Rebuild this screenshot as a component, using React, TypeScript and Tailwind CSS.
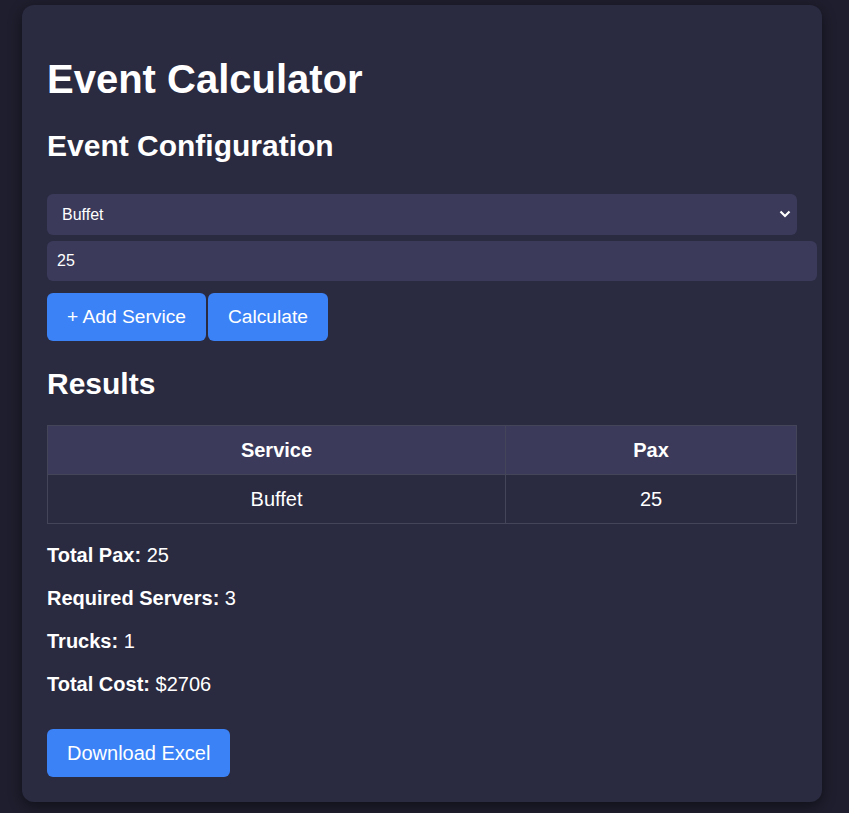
import { useState } from 'react'

export default function App() {
  const [service, setService] = useState('Buffet')
  const [pax, setPax] = useState('25')

  return (
    <div className="min-h-screen bg-[#1e1e2e] pt-[5px] pl-[22px] font-['Liberation_Sans',Arial,sans-serif] text-white">
      <div className="w-[800px] rounded-xl bg-[#2a2a40] p-[25px] shadow-[0_4px_14px_rgba(0,0,0,0.45)]">
        <h1 className="mt-[26px] text-[40px] font-bold leading-[46px]">Event Calculator</h1>
        <h2 className="mt-[26px] text-[30px] font-bold leading-[35px]">Event Configuration</h2>

        <div className="relative mt-[31px] w-[750px]">
          <select
            value={service}
            onChange={(e) => setService(e.target.value)}
            className="block h-[41px] w-full appearance-none rounded-md bg-[#3b3a5a] pl-[15px] text-[16px] text-white outline-none"
          >
            <option>Buffet</option>
            <option>Plated</option>
            <option>Cocktail</option>
          </select>
          <svg
            className="pointer-events-none absolute right-[6px] top-[15px]"
            width="12"
            height="10"
            viewBox="0 0 12 10"
            fill="none"
          >
            <polyline points="1.5,2.5 6,7 10.5,2.5" stroke="white" strokeWidth="2.2" />
          </svg>
        </div>

        <input
          value={pax}
          onChange={(e) => setPax(e.target.value)}
          className="mt-[6px] block h-[40px] w-[770px] rounded-md bg-[#3b3a5a] px-[10px] text-[16px] text-white outline-none"
        />

        <div className="mt-[12px] flex gap-[2px]">
          <button className="h-[48px] rounded-md bg-[#3b82f6] px-[20px] text-[19.2px] text-white">
            + Add Service
          </button>
          <button className="h-[48px] rounded-md bg-[#3b82f6] px-[20px] text-[19.2px] text-white">
            Calculate
          </button>
        </div>

        <h2 className="mt-[25px] text-[30px] font-bold leading-[35px]">Results</h2>

        <table className="mt-[24px] w-[750px] border-collapse text-[20px] leading-[22px]">
          <thead>
            <tr className="bg-[#3b3a5a]">
              <th className="w-[458px] border border-[#45455a] px-[15px] py-[13px] font-bold">Service</th>
              <th className="border border-[#45455a] px-[15px] py-[13px] font-bold">Pax</th>
            </tr>
          </thead>
          <tbody>
            <tr>
              <td className="border border-[#45455a] px-[15px] py-[13px] text-center">{service}</td>
              <td className="border border-[#45455a] px-[15px] py-[13px] text-center">{pax}</td>
            </tr>
          </tbody>
        </table>

        <div className="mt-[20px] flex flex-col gap-[21px] text-[20px] leading-[22px]">
          <p>
            <span className="font-bold">Total Pax:</span> {pax}
          </p>
          <p>
            <span className="font-bold">Required Servers:</span> 3
          </p>
          <p>
            <span className="font-bold">Trucks:</span> 1
          </p>
          <p>
            <span className="font-bold">Total Cost:</span> $2706
          </p>
        </div>

        <button className="mt-[34px] h-[48px] rounded-md bg-[#3b82f6] px-[20px] text-[20px] text-white">
          Download Excel
        </button>
      </div>
    </div>
  )
}
